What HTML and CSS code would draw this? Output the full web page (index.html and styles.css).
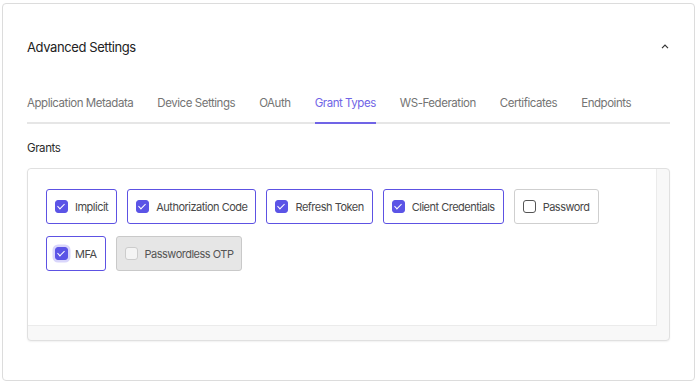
FILE: index.html
```html
<!DOCTYPE html>
<html lang="en">
<head>
    <meta charset="UTF-8">
    <title>Advanced Settings</title>
    <link rel="stylesheet" href="styles.css">
</head>
<body>
    <div class="card">
        <div class="card-head">
            <div class="card-title">Advanced Settings</div>
            <svg class="chevron" width="8" height="5" viewBox="0 0 8 5"><path d="M1 4.2 L4 1.2 L7 4.2" fill="none" stroke="#333" stroke-width="1.2"/></svg>
        </div>

        <!-- tabs -->
        <div class="tabs">
            <div class="tab">Application Metadata</div>
            <div class="tab">Device Settings</div>
            <div class="tab">OAuth</div>
            <div class="tab active">Grant Types</div>
            <div class="tab">WS-Federation</div>
            <div class="tab">Certificates</div>
            <div class="tab">Endpoints</div>
        </div>

        <div class="section-label">Grants</div>
        <div class="grant-box">
            <div class="grant-inner">
                <label class="chip checked"><span class="box"></span>Implicit</label>
                <label class="chip checked"><span class="box"></span>Authorization Code</label>
                <label class="chip checked"><span class="box"></span>Refresh Token</label>
                <label class="chip checked"><span class="box"></span>Client Credentials</label>
                <label class="chip"><span class="box"></span>Password</label>
                <label class="chip checked focus"><span class="box"></span>MFA</label>
                <label class="chip disabled"><span class="box"></span>Passwordless OTP</label>
            </div>
        </div>
    </div>
</body>
</html>
```
FILE: styles.css
```css
body {
    margin: 0;
    font-family: Inter, "Noto Sans", sans-serif;
    color: #2b2b2b;
    background: #fff;
    white-space: nowrap;
}
.card {
    margin: 3px 3px 0 2px;
    height: 378px;
    border: 1px solid #dcdcdc;
    border-radius: 4px;
    padding: 0 24px 0 24px;
    box-sizing: border-box;
}
.card-head {
    height: 85px;
    display: flex;
    align-items: center;
    justify-content: space-between;
}
.card-title {
    font-size: 13px;
    letter-spacing: -0.4px;
    color: #222;
}
.chevron {
    margin-right: 1px;
}
.tabs {
    display: flex;
    gap: 24px;
    margin-top: 1px;
    border-bottom: 2px solid #e6e6e6;
}
.tab {
    font-size: 11.5px;
    letter-spacing: -0.45px;
    color: #747474;
    padding: 5px 0 11px;
    margin-bottom: -2px;
    border-bottom: 2px solid transparent;
    line-height: 16px;
}
.tab.active {
    color: #7064e6;
    border-bottom-color: #7064e6;
}
.section-label {
    font-size: 11.5px;
    letter-spacing: -0.4px;
    color: #2b2b2b;
    margin-top: 16px;
    line-height: 16px;
}
.grant-box {
    margin-top: 12px;
    border: 1px solid #e0e0e0;
    border-radius: 4px;
    background: #f8f8f8;
    padding: 0 12px 14px 0;
    box-shadow: 0 1px 2px rgba(0,0,0,0.06);
}
.grant-inner {
    background: #fff;
    border-right: 1px solid #ebebeb;
    border-bottom: 1px solid #ebebeb;
    border-radius: 4px 0 0 0;
    height: 157px;
    box-sizing: border-box;
    padding: 20px 18px;
    display: flex;
    flex-wrap: wrap;
    align-content: flex-start;
    gap: 12px 10px;
}
.chip {
    height: 35px;
    box-sizing: border-box;
    display: flex;
    align-items: center;
    gap: 7px;
    padding: 0 8px;
    border: 1px solid #cfcfcf;
    border-radius: 3px;
    font-size: 11px;
    letter-spacing: -0.5px;
    color: #484848;
    background: #fff;
}
.box {
    width: 13px;
    height: 13px;
    box-sizing: border-box;
    border: 1.5px solid #555;
    border-radius: 3px;
    position: relative;
}
.chip.checked {
    border: 1.5px solid #5d52e3;
}
.chip.checked .box {
    background: #5b54e6;
    border-color: #5b54e6;
}
.chip.checked .box::after {
    content: "";
    position: absolute;
    left: 3px;
    top: 1px;
    width: 3px;
    height: 6px;
    border: solid #fff;
    border-width: 0 1.3px 1.3px 0;
    transform: rotate(45deg);
}
.chip.focus .box {
    box-shadow: 0 0 0 2.5px #d9d6fb;
}
.chip.disabled {
    background: #e6e6e6;
    border-color: #c9c9c9;
    color: #555;
}
.chip.disabled .box {
    background: #f4f4f4;
    border: 1px solid #cccccc;
}
```
